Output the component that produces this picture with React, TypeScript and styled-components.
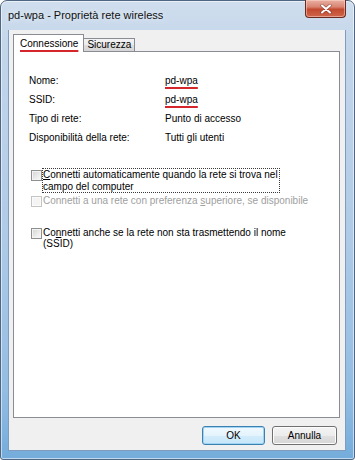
import styled, { createGlobalStyle } from "styled-components"

const FONT = `"Liberation Sans", Arial, sans-serif`

const GlobalStyle = createGlobalStyle`
    html, body {
        margin: 0;
        padding: 0;
        background: #fff;
    }
    body {
        font-family: ${FONT};
        font-size: 10px;
        color: #000;
    }
`

const Window = styled.div`
    width: 355px;
    height: 460px;
    box-sizing: border-box;
    display: flex;
    flex-direction: column;
    border: 1px solid #4f6783;
    border-radius: 7px 7px 3px 3px;
    padding: 0 8px 8px 7px;
    background: linear-gradient(180deg, #d0deee 0%, #c3d6ea 10%, #b0cbe7 50%, #93bde3 85%, #74acdb 100%);
    box-shadow: inset 0 0 0 1px rgba(255, 255, 255, 0.55);
`

const TitleBar = styled.div`
    height: 29px;
    display: flex;
    justify-content: space-between;
    align-items: flex-start;
    flex: none;
`

const Title = styled.div`
    margin-top: 7px;
    font-size: 11px;
    line-height: 14px;
    color: #111;
    text-shadow: 0 0 6px rgba(255, 255, 255, 0.9);
`

const CloseButton = styled.div`
    width: 41px;
    height: 18px;
    margin-top: -1px;
    box-sizing: border-box;
    border: 1px solid #6b2a20;
    border-top: none;
    border-radius: 0 0 4px 4px;
    background: linear-gradient(180deg, #eab0a2 0%, #d98572 40%, #c24a30 55%, #d0664a 100%);
    box-shadow: inset 0 0 0 1px rgba(255, 220, 210, 0.5);
    display: flex;
    align-items: center;
    justify-content: center;
`

const Client = styled.div`
    flex: 1;
    display: flex;
    flex-direction: column;
    background: #f0f0f0;
    border: 1px solid #7f9cc0;
    border-top: none;
    padding: 4px 5px 0 4px;
`

const TabStrip = styled.div`
    height: 18px;
    display: flex;
    align-items: flex-end;
    margin-bottom: -1px;
    position: relative;
    z-index: 1;
    flex: none;
`

const Tab = styled.div<{ $active?: boolean }>`
    box-sizing: border-box;
    height: ${p => (p.$active ? "18px" : "13px")};
    margin-bottom: ${p => (p.$active ? "0" : "1px")};
    padding: ${p => (p.$active ? "0 5px 0 6px" : "0 3px 0 3px")};
    border: 1px solid #898c95;
    border-bottom: none;
    ${p => !p.$active && "border-left: none;"}
    background: ${p => (p.$active ? "#fff" : "linear-gradient(180deg, #f3f3f3 0%, #ebebeb 50%, #dfdfdf 51%, #d5d5d5 100%)")};
    display: flex;
    align-items: center;
    line-height: 12px;
`

const Marked = styled.span<{ $marked?: boolean }>`
    ${p => p.$marked && `
        text-decoration: underline;
        text-decoration-color: #d4262b;
        text-decoration-thickness: 1.5px;
        text-underline-offset: 3px;
    `}
`

const Panel = styled.div`
    flex: 1;
    background: #fff;
    border: 1px solid #898c95;
    padding: 0 0 0 15px;
    display: flex;
    flex-direction: column;
`

const InfoGrid = styled.div`
    display: grid;
    grid-template-columns: 136px auto;
    grid-auto-rows: 19px;
    align-items: center;
    margin-top: 19px;
    line-height: 11.5px;
`

const CheckList = styled.div`
    margin-top: 21px;
    display: flex;
    flex-direction: column;
`

const CheckRow = styled.div<{ $gap?: number }>`
    display: flex;
    align-items: flex-start;
    margin-top: ${p => p.$gap ?? 0}px;
`

const Box = styled.span<{ $disabled?: boolean }>`
    flex: none;
    width: 11px;
    height: 11px;
    box-sizing: border-box;
    margin: 2px 0 0 2px;
    border: 1px solid ${p => (p.$disabled ? "#c4c4c4" : "#8e8f8f")};
    background: ${p => (p.$disabled ? "#f4f4f4" : "linear-gradient(135deg, #d2d2d2 0%, #ececec 60%, #fafafa 100%)")};
    box-shadow: inset 0 0 0 1px ${p => (p.$disabled ? "#fbfbfb" : "#f4f4f4")};
`

const CheckLabel = styled.span<{ $focused?: boolean; $disabled?: boolean; $w?: number }>`
    width: ${p => (p.$w ? `${p.$w}px` : "auto")};
    box-sizing: border-box;
    border: 1px dotted ${p => (p.$focused ? "#3a3a3a" : "transparent")};
    padding: 0;
    line-height: 11.5px;
    color: ${p => (p.$disabled ? "#a0a0a0" : "#000")};
    white-space: nowrap;
`

const Line = styled.span`
    display: block;
`

const Footer = styled.div`
    flex: none;
    display: flex;
    justify-content: flex-end;
    gap: 7px;
    padding: 8px 3px 5px 0;
`

const Button = styled.button<{ $primary?: boolean; $w: number }>`
    width: ${p => p.$w}px;
    height: 19px;
    box-sizing: border-box;
    font-family: ${FONT};
    font-size: 10px;
    color: #000;
    padding: 0;
    border-radius: 3px;
    border: 1px solid ${p => (p.$primary ? "#3c7fb1" : "#707070")};
    background: ${p =>
        p.$primary
            ? "linear-gradient(180deg, #f1f9fe 0%, #e4f3fc 50%, #d3ecfb 51%, #c6e6f9 100%)"
            : "linear-gradient(180deg, #f4f4f4 0%, #ececec 50%, #e0e0e0 51%, #d6d6d6 100%)"};
    box-shadow: inset 0 0 0 1px ${p => (p.$primary ? "#9fd5f3" : "#fcfcfc")};
`

const App = () => {
    return (
        <>
            <GlobalStyle />
            <Window>
                <TitleBar>
                    <Title>pd-wpa - Proprietà rete wireless</Title>
                    <CloseButton>
                        <svg width="12" height="10" viewBox="0 0 12 10">
                            <path d="M2 1.5 L10 8.5 M10 1.5 L2 8.5" stroke="#5a2018" strokeWidth="3.4" strokeLinecap="round" opacity="0.45" />
                            <path d="M2 1.5 L10 8.5 M10 1.5 L2 8.5" stroke="#fff" strokeWidth="2" strokeLinecap="round" />
                        </svg>
                    </CloseButton>
                </TitleBar>
                <Client>
                    <TabStrip>
                        <Tab $active><Marked $marked>Connessione</Marked></Tab>
                        <Tab><span>Sicurezza</span></Tab>
                    </TabStrip>
                    <Panel>
                        <InfoGrid>
                            <span>Nome:</span>
                            <Marked $marked>pd-wpa</Marked>
                            <span>SSID:</span>
                            <Marked $marked>pd-wpa</Marked>
                            <span>Tipo di rete:</span>
                            <span>Punto di accesso</span>
                            <span>Disponibilità della rete:</span>
                            <span>Tutti gli utenti</span>
                        </InfoGrid>
                        <CheckList>
                            <CheckRow>
                                <Box />
                                <CheckLabel $focused $w={238}>
                                    <Line><u>C</u>onnetti automaticamente quando la rete si trova nel</Line>
                                    <Line>campo del computer</Line>
                                </CheckLabel>
                            </CheckRow>
                            <CheckRow $gap={1}>
                                <Box $disabled />
                                <CheckLabel $disabled>
                                    <Line>Connetti a una rete con preferenza <u>s</u>uperiore, se disponibile</Line>
                                </CheckLabel>
                            </CheckRow>
                            <CheckRow $gap={18}>
                                <Box />
                                <CheckLabel $w={250}>
                                    <Line>Co<u>n</u>netti anche se la rete non sta trasmettendo il nome</Line>
                                    <Line>(SSID)</Line>
                                </CheckLabel>
                            </CheckRow>
                        </CheckList>
                    </Panel>
                    <Footer>
                        <Button $primary $w={63}>OK</Button>
                        <Button $w={65}>Annulla</Button>
                    </Footer>
                </Client>
            </Window>
        </>
    )
}

export default App
